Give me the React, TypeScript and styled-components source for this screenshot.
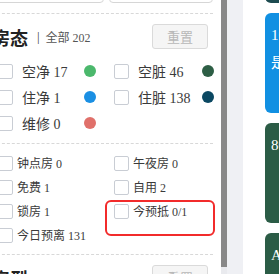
import React from 'react';
import styled, { createGlobalStyle } from 'styled-components';

const GlobalStyle = createGlobalStyle`
    html, body {
        margin: 0;
        padding: 0;
        overflow: hidden;
        background: #fff;
    }
    body {
        font-family: "Liberation Serif", "Noto Sans CJK SC", serif;
    }
`;

const Root = styled.div`
    display: flex;
    width: 279px;
    height: 274px;
    overflow: hidden;
`;

const LeftPanel = styled.div`
    flex: none;
    width: 221px;
    height: 274px;
    overflow: hidden;
    background: #fff;
`;

const Content = styled.div`
    margin-left: -8px;
    width: 221px;
`;

const TopBoxes = styled.div`
    display: flex;
    gap: 5px;
    height: 30px;
    margin-top: -27px;
`;

const FieldBox = styled.div<{ width: number }>`
    box-sizing: border-box;
    width: ${(props) => props.width}px;
    height: 30px;
    border: 1px solid #d6d6d6;
    border-radius: 4px;
`;

const Section = styled.div<{ padTop: number }>`
    position: relative;
    border-top: 1px dashed #d8d8d8;
    padding: ${(props) => props.padTop}px 0 7px;
`;

const FirstSection = styled(Section)`
    margin-top: 10px;
`;

const Header = styled.div`
    display: flex;
    align-items: center;
    justify-content: space-between;
    height: 25px;
    padding-right: 5px;
`;

const TitleWrap = styled.div`
    display: flex;
    align-items: center;
`;

const Title = styled.span`
    font-size: 18px;
    font-weight: bold;
    color: #222;
`;

const Sep = styled.span`
    margin: 0 6px 0 9px;
    font-size: 13px;
    color: #444;
`;

const Total = styled.span`
    font-size: 12px;
    color: #555;
`;

const ResetButton = styled.button`
    box-sizing: border-box;
    width: 56px;
    height: 25px;
    padding: 0;
    border: 1px solid #dadada;
    border-radius: 3px;
    background: #f5f5f5;
    color: #b8b8b8;
    font-family: "Liberation Serif", "Noto Sans CJK SC", serif;
    font-size: 13px;
`;

const Grid = styled.div<{ rowHeight: number; top: number }>`
    display: grid;
    grid-template-columns: 98px 100px;
    grid-auto-rows: ${(props) => props.rowHeight}px;
    column-gap: 18px;
    padding-left: 6px;
    margin-top: ${(props) => props.top}px;
`;

const Cell = styled.label<{ gap: number }>`
    display: flex;
    align-items: center;
    gap: ${(props) => props.gap}px;
`;

const Box = styled.span`
    flex: none;
    box-sizing: border-box;
    width: 15px;
    height: 15px;
    border: 1px solid #c9cdd4;
    border-radius: 2px;
    background: #fff;
`;

const Label = styled.span<{ size: number }>`
    flex: 1;
    font-size: ${(props) => props.size}px;
    color: #3a3a3a;
    white-space: nowrap;
`;

const Dot = styled.span<{ color: string }>`
    flex: none;
    width: 12px;
    height: 12px;
    border-radius: 50%;
    background: ${(props) => props.color};
`;

const Mark = styled.div`
    position: absolute;
    left: 113px;
    top: 56px;
    box-sizing: border-box;
    width: 110px;
    height: 36px;
    border: 2px solid #f22b2b;
    border-radius: 6px;
    pointer-events: none;
`;

const Scrollbar = styled.div`
    flex: none;
    display: flex;
    flex-direction: column;
    width: 6px;
    background: #e9eaee;
`;

const Thumb = styled.div`
    height: 267px;
    background: #888;
`;

const Gutter = styled.div`
    flex: none;
    width: 16px;
    background: #eff0f4;
`;

const CardColumn = styled.div`
    flex: none;
    display: flex;
    flex-direction: column;
    gap: 10px;
    width: 120px;
    padding-left: 22px;
    background: #fff;
`;

const Card = styled.div<{ bg: string; first?: boolean }>`
    flex: none;
    box-sizing: border-box;
    width: 100px;
    height: 100px;
    margin-top: ${(props) => (props.first ? -97 : 0)}px;
    padding: 8px 6px;
    border-radius: 6px;
    background: ${(props) => props.bg};
    color: #fff;
    font-size: 15px;
    line-height: 28px;
`;

const statusA = [
    { label: '空净 17', color: '#4bb86c' },
    { label: '空脏 46', color: '#2d5e45' },
    { label: '住净 1', color: '#1a8fe3' },
    { label: '住脏 138', color: '#0b4862' },
    { label: '维修 0', color: '#e0706a' },
];

const statusB = ['钟点房 0', '午夜房 0', '免费 1', '自用 2', '锁房 1', '今预抵 0/1', '今日预离 131'];

export default function App() {
    return (
        <Root>
            <GlobalStyle />
            <LeftPanel>
                <Content>
                    <TopBoxes>
                        <FieldBox width={112} />
                        <FieldBox width={104} />
                    </TopBoxes>
                    <FirstSection padTop={10}>
                        <Header>
                            <TitleWrap>
                                <Title>房态</Title>
                                <Sep>|</Sep>
                                <Total>全部 202</Total>
                            </TitleWrap>
                            <ResetButton>重置</ResetButton>
                        </Header>
                        <Grid rowHeight={26} top={9}>
                            {statusA.map((s) => (
                                <Cell gap={9} key={s.label}>
                                    <Box />
                                    <Label size={14}>{s.label}</Label>
                                    <Dot color={s.color} />
                                </Cell>
                            ))}
                        </Grid>
                    </FirstSection>
                    <Section padTop={7}>
                        <Grid rowHeight={24} top={0}>
                            {statusB.map((s) => (
                                <Cell gap={4} key={s}>
                                    <Box />
                                    <Label size={12}>{s}</Label>
                                </Cell>
                            ))}
                        </Grid>
                        <Mark />
                    </Section>
                    <Section padTop={10}>
                        <Header>
                            <TitleWrap>
                                <Title>房型</Title>
                            </TitleWrap>
                            <ResetButton>重置</ResetButton>
                        </Header>
                    </Section>
                </Content>
            </LeftPanel>
            <Scrollbar>
                <Thumb />
            </Scrollbar>
            <Gutter />
            <CardColumn>
                <Card bg="#1d4b50" first />
                <Card bg="#1190e2">
                    <div>1018</div>
                    <div>是否</div>
                </Card>
                <Card bg="#2b5c46">
                    <div>8016</div>
                </Card>
                <Card bg="#2b5c46">
                    <div>A区</div>
                </Card>
            </CardColumn>
        </Root>
    );
}
